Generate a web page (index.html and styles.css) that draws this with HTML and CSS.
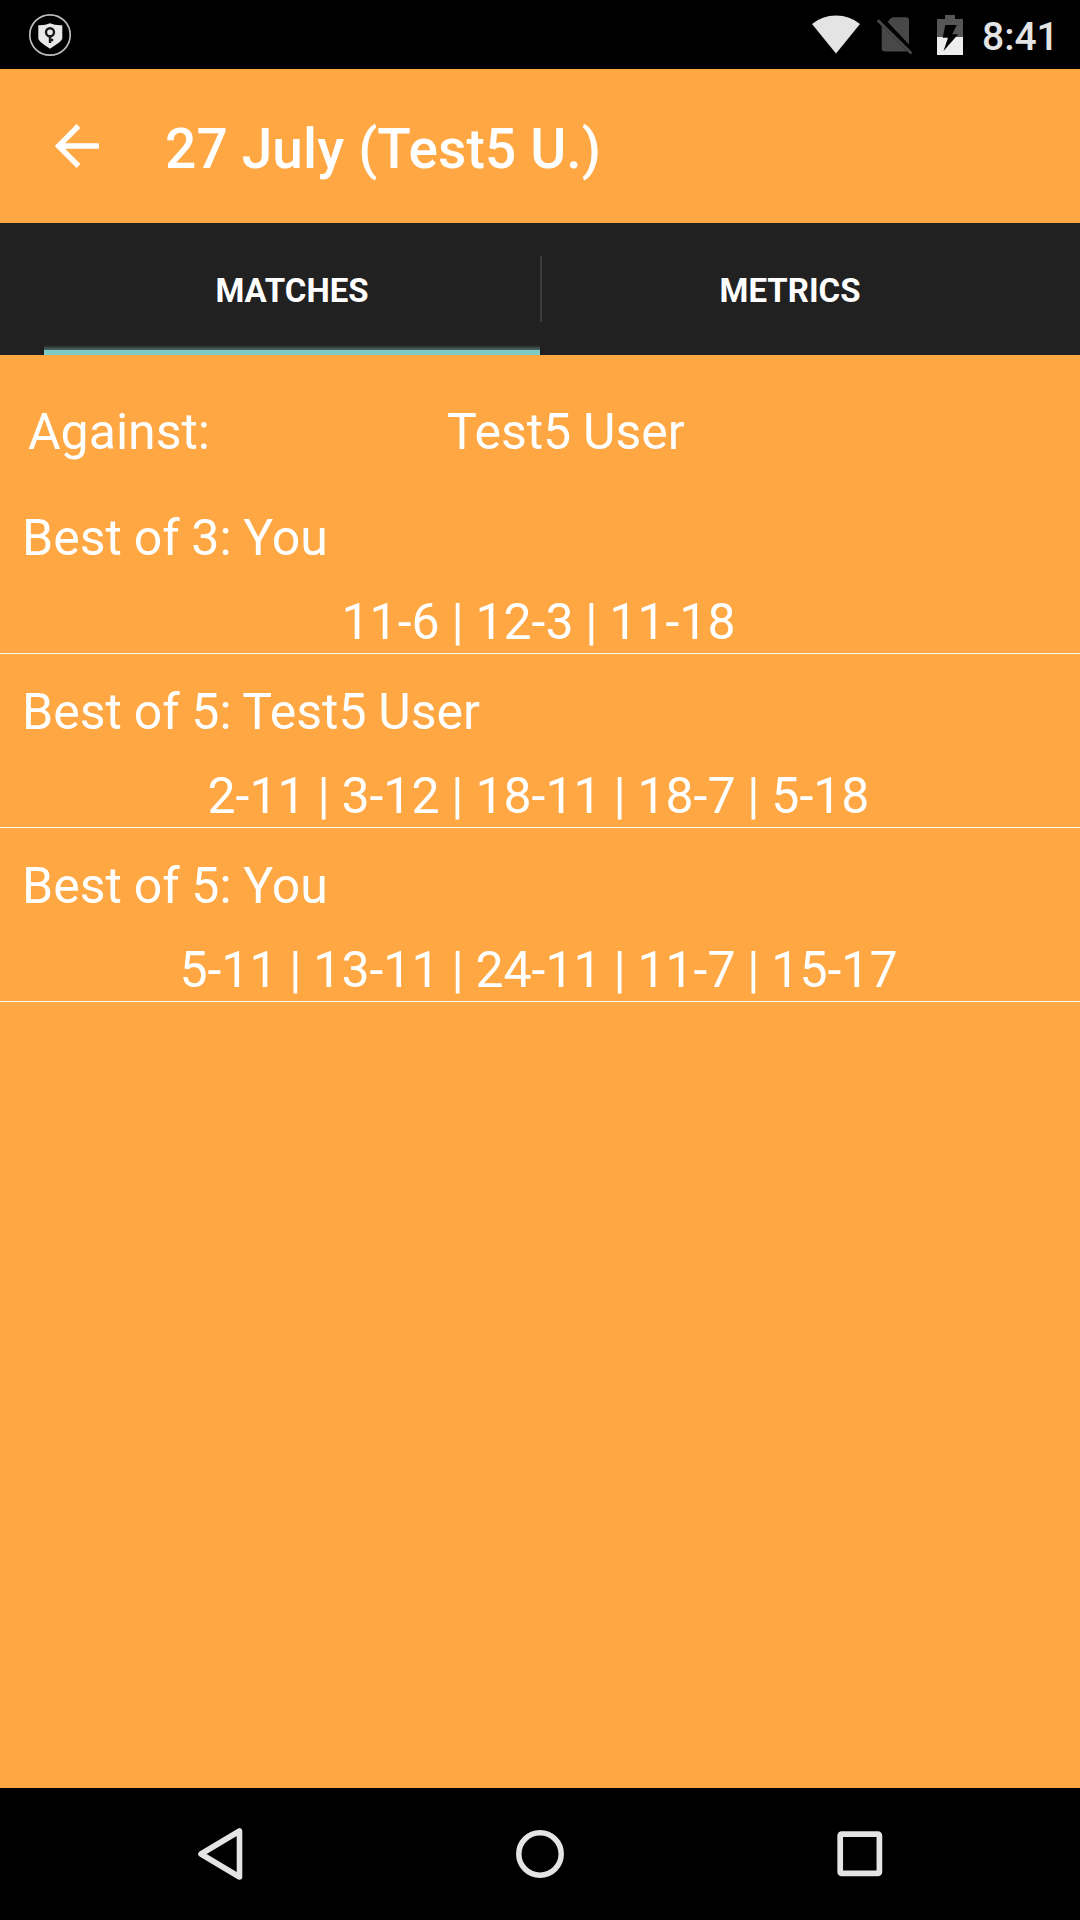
FILE: index.html
```html
<!DOCTYPE html>
<html lang="en">
<head>
<meta charset="utf-8">
<title>27 July</title>
<link rel="stylesheet" href="styles.css">
</head>
<body>
<div class="status">
<svg class="shield" width="44" height="44" viewBox="0 0 44 44"><circle cx="22" cy="22" r="20.200" fill="none" stroke="#bcbcbc" stroke-width="1.700"/><path d="M10.300 12.200Q17 12.500 22 10.300Q27 12.500 34.300 12.200V25C34.300 28 29 31 22 35.800C15 31 10.300 28 10.300 25z" fill="#e8e8e8"/><circle cx="22" cy="19.200" r="4" fill="none" stroke="#1a1a1a" stroke-width="2.400"/><path d="M22 23v7M22 27h3.200" fill="none" stroke="#1a1a1a" stroke-width="2.400"/></svg>
<svg class="wifi" width="48" height="39" viewBox="0 0 48 39"><path d="M0 9Q10 .5 24 .5T48 9L24 38.500z" fill="#e4e4e4"/></svg>
<svg class="sim" width="36" height="38" viewBox="0 0 36 38"><path d="M10.500 4.800L14 1Q15 .3 16 .3H29Q32 .3 32 3.300V27.500zM4.700 9L30.500 34.500H8Q4.700 34.500 4.700 31.500z" fill="#484848"/><path d="M.8 3.200L34.500 36.500" stroke="#484848" stroke-width="2.800"/></svg>
<svg class="battery" width="26" height="40" viewBox="0 0 26 40"><path d="M8 0h10v4h8v18H0V4h8z" fill="#565656"/><path d="M0 22h26v18H0z" fill="#ededed"/><path d="M8.300 10h11.500l-4.600 9.300h6L6.500 36l4.500-13.200H5.700z" fill="#000"/></svg>
<span class="clock">8:41</span>
</div>
<header class="bar">
<svg class="back" width="44" height="44" viewBox="0 0 44 44"><path d="M44 22H5M23.500 2L3.500 22l20 20" fill="none" stroke="#fff" stroke-width="5.400"/></svg>
<h1>27 July (Test5 U.)</h1>
</header>
<nav class="tabs">
<div class="tab active">MATCHES</div>
<div class="divider"></div>
<div class="tab">METRICS</div>
</nav>
<main>
<div class="against"><span class="label">Against:</span><span>Test5 User</span></div>
<section class="match"><h2>Best of 3: You</h2><p>11-6 | 12-3 | 11-18</p></section>
<section class="match"><h2>Best of 5: Test5 User</h2><p>2-11 | 3-12 | 18-11 | 18-7 | 5-18</p></section>
<section class="match"><h2>Best of 5: You</h2><p>5-11 | 13-11 | 24-11 | 11-7 | 15-17</p></section>
</main>
<footer class="keys">
<svg width="46" height="54" viewBox="0 0 46 54"><path d="M42.500 4v46L4 27z" fill="none" stroke="#e4e4e4" stroke-width="5.600" stroke-linejoin="round"/></svg>
<svg width="48" height="48" viewBox="0 0 48 48"><circle cx="24" cy="24" r="21.200" fill="none" stroke="#e4e4e4" stroke-width="5.500"/></svg>
<svg width="46" height="46" viewBox="0 0 46 46"><rect x="3.200" y="3.200" width="39.200" height="39.200" rx="1.500" fill="none" stroke="#e4e4e4" stroke-width="5.700"/></svg>
</footer>
</body>
</html>
```
FILE: styles.css
```css
* { box-sizing: border-box; margin: 0; padding: 0; }
body {
  width: 1080px;
  height: 1920px;
  display: flex;
  flex-direction: column;
  background: #ffa743;
  color: #fff;
  font-family: Roboto, sans-serif;
  overflow: hidden;
}
svg { display: block; flex: none; }

.status {
  height: 69px;
  background: #000;
  display: flex;
  align-items: center;
  padding: 0 24px 0 28px;
}
.wifi { margin-left: auto; }
.sim { margin: 2px 0 0 17px; }
.battery { margin-left: 24px; }
.clock {
  width: 74px;
  margin: 5px 0 0 19px;
  font-size: 39px;
  line-height: 46px;
  font-weight: 500;
  color: #e4e4e4;
}

.bar {
  height: 154px;
  display: flex;
  align-items: center;
  padding-left: 55px;
}
h1 {
  font-size: 55px;
  line-height: 64px;
  font-weight: 500;
  letter-spacing: 0.15px;
  margin: 6px 0 0 66px;
}

.tabs {
  height: 132px;
  background: #212121;
  display: flex;
  padding-left: 44px;
}
.tab {
  width: 496px;
  padding-top: 2px;
  text-align: center;
  font-size: 33px;
  line-height: 132px;
  font-weight: 700;
}
.active {
  background: linear-gradient(to top, #80cbc4 5px, #4c6966 5px, #212121 10px);
}
.divider {
  width: 2px;
  height: 66px;
  margin-top: 33px;
  background: #3c3c3c;
}

main {
  flex: 1;
  font-size: 50px;
  line-height: 60px;
  word-spacing: -0.6px;
}
.against {
  display: flex;
  height: 125px;
  padding: 47px 28px 0;
}
.label { width: 419px; }
.match {
  height: 174px;
  border-bottom: 1px solid #fffaf0;
  padding: 28px 25px 0 22px;
}
h2 { font-size: 50px; font-weight: 400; }
.match p { text-align: center; margin-top: 24px; }

.keys {
  height: 132px;
  background: #000;
  display: grid;
  grid-template-columns: repeat(3, 320px);
  padding: 0 60px;
  place-items: center;
}
```
